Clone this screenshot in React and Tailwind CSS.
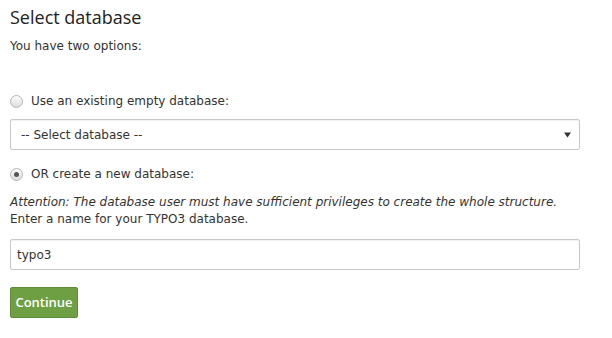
import { useState } from 'react';

const Radio = ({ checked }) => (
  <span className="inline-flex items-center justify-center w-[13px] h-[13px] rounded-full border border-[#b5b5b5] bg-gradient-to-b from-[#fcfcfc] to-[#dedede] shrink-0">
    {checked && <span className="w-[5px] h-[5px] rounded-full bg-[#555]" />}
  </span>
);

export default function App() {
  const [name, setName] = useState('typo3');
  const [mode, setMode] = useState('new');

  return (
    <div className="w-[612px] h-[338px] bg-white text-[#333] px-[10px]" style={{ fontFamily: 'Verdana, "DejaVu Sans", sans-serif' }}>
      <h1 className="pt-[6px] text-[18px] leading-[22px] font-normal text-[#222]" style={{ fontFamily: '"Open Sans", sans-serif' }}>
        Select database
      </h1>
      <p className="mt-[10px] text-[12px] leading-[16px]">You have two options:</p>

      <label className="mt-[39px] flex items-center gap-[8px] text-[12px] leading-[16px]" onClick={() => setMode('existing')}>
        <Radio checked={mode === 'existing'} />
        <span>Use an existing empty database:</span>
      </label>

      <div className="mt-[10px] w-[570px] h-[31px] flex items-center justify-between pl-[10px] pr-[6px] border border-[#c8c8c8] rounded-[2px] shadow-[inset_0_1px_1px_rgba(0,0,0,0.06)] text-[12px]">
        <span>-- Select database --</span>
        <svg width="7" height="7" viewBox="0 0 7 7" className="mr-[2px]">
          <path d="M0 1.5h7L3.5 6.5z" fill="#333" />
        </svg>
      </div>

      <label className="mt-[16px] flex items-center gap-[8px] text-[12px] leading-[16px]" onClick={() => setMode('new')}>
        <Radio checked={mode === 'new'} />
        <span>OR create a new database:</span>
      </label>

      <p className="mt-[12px] text-[12px] leading-[17px] italic">
        Attention: The database user must have sufficient privileges to create the whole structure.
      </p>
      <p className="text-[12px] leading-[17px]">Enter a name for your TYPO3 database.</p>

      <input
        value={name}
        onChange={(e) => setName(e.target.value)}
        className="mt-[11px] block w-[570px] h-[31px] px-[6px] border border-[#c8c8c8] rounded-[2px] shadow-[inset_0_1px_1px_rgba(0,0,0,0.06)] text-[12px] text-[#333] outline-none"
      />

      <button
        className="mt-[17px] block w-[68px] h-[31px] bg-[#6e9f42] border border-[#5f8c36] rounded-[2px] text-white text-[13px] font-semibold"
        style={{ fontFamily: '"Open Sans", sans-serif' }}
      >
        Continue
      </button>
    </div>
  );
}
